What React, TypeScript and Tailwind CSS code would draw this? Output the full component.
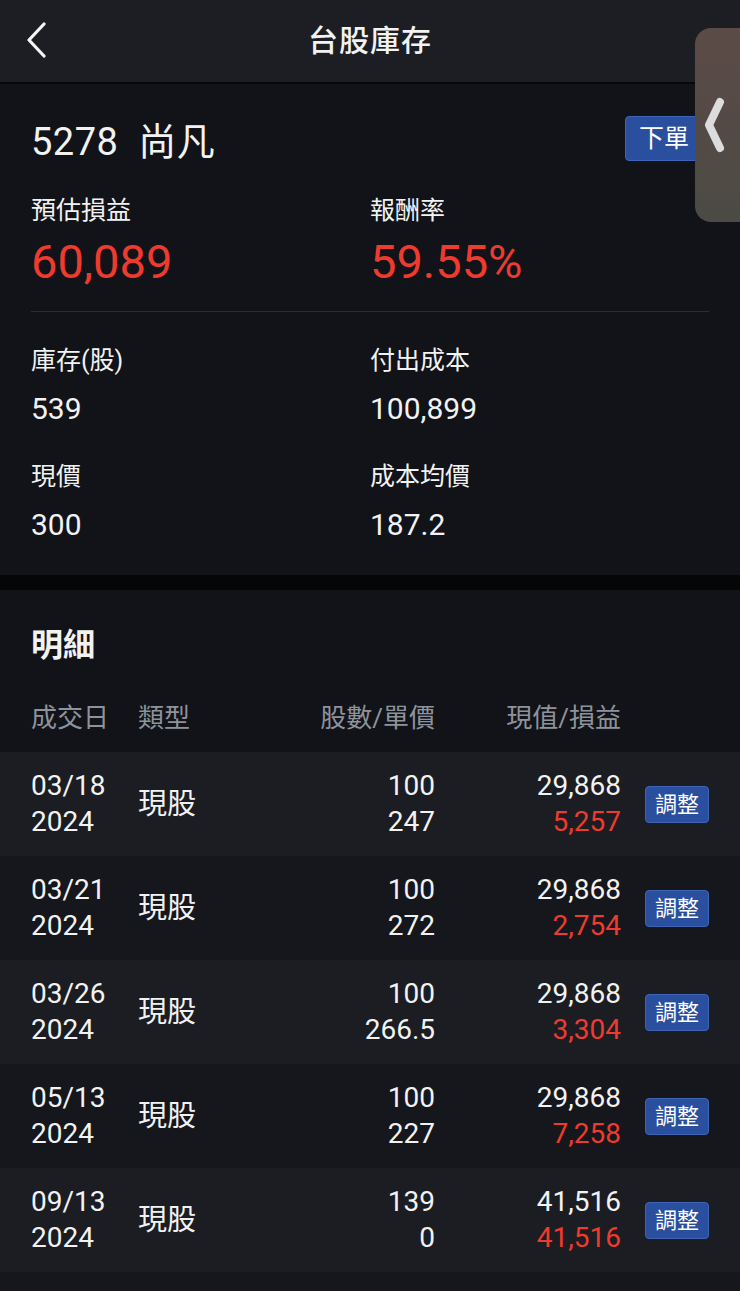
import React from "react";

const FONT = { fontFamily: '"Roboto", "Noto Sans CJK TC", "Noto Sans", sans-serif' };

const rows = [
  { md: "03/18", y: "2024", q: "100", p: "247", v: "29,868", pl: "5,257" },
  { md: "03/21", y: "2024", q: "100", p: "272", v: "29,868", pl: "2,754" },
  { md: "03/26", y: "2024", q: "100", p: "266.5", v: "29,868", pl: "3,304" },
  { md: "05/13", y: "2024", q: "100", p: "227", v: "29,868", pl: "7,258" },
  { md: "09/13", y: "2024", q: "139", p: "0", v: "41,516", pl: "41,516" },
];

export default function App() {
  return (
    <div className="relative w-[740px] min-h-[1291px] bg-[#15171c] text-[#f2f2f2] overflow-hidden" style={FONT}>
      {/* Header */}
      <div className="relative h-[84px] bg-[#1c1e23] border-b-2 border-[#07080a] flex items-center justify-center">
        <svg className="absolute left-[24px] top-[22px]" width="24" height="36" viewBox="0 0 24 36" fill="none">
          <path d="M20 2 L5 18 L20 34" stroke="#f5f5f5" strokeWidth="3.2" strokeLinecap="round" strokeLinejoin="round" />
        </svg>
        <div className="text-[30px] font-medium leading-none tracking-[1px]">台股庫存</div>
      </div>

      {/* Summary */}
      <div className="bg-[#111319] px-[31px] pt-[32px] pb-[32px]">
        <div className="flex items-center justify-between h-[45px]">
          <div className="text-[38px] leading-[44px] mt-[6px] tracking-[0.5px]">5278&nbsp; 尚凡</div>
          <div className="h-[45px] w-[86px] rounded-[4px] bg-[#2a4f9e] border border-[#3d64b8] flex items-center pl-[13px] text-[25px] text-white mr-[-2px]">
            下單
          </div>
        </div>
        <div className="grid grid-cols-2 mt-[34px]">
          <div>
            <div className="text-[25px] leading-[32px]">預估損益</div>
            <div className="text-[47px] leading-[52px] mt-[9px] text-[#ee3b2e]">60,089</div>
          </div>
          <div>
            <div className="text-[25px] leading-[32px]">報酬率</div>
            <div className="text-[47px] leading-[52px] mt-[9px] text-[#ee3b2e]">59.55%</div>
          </div>
        </div>
        <div className="h-px bg-[#2a2d33] mt-[23px]" />
        <div className="grid grid-cols-2 mt-[33px]">
          <div>
            <div className="text-[25px] leading-[32px]">庫存(股)</div>
            <div className="text-[30px] leading-[36px] mt-[14px]">539</div>
          </div>
          <div>
            <div className="text-[25px] leading-[32px]">付出成本</div>
            <div className="text-[30px] leading-[36px] mt-[14px]">100,899</div>
          </div>
        </div>
        <div className="grid grid-cols-2 mt-[34px]">
          <div>
            <div className="text-[25px] leading-[32px]">現價</div>
            <div className="text-[30px] leading-[36px] mt-[14px]">300</div>
          </div>
          <div>
            <div className="text-[25px] leading-[32px]">成本均價</div>
            <div className="text-[30px] leading-[36px] mt-[14px]">187.2</div>
          </div>
        </div>
      </div>

      <div className="h-[15px] bg-[#050608]" />

      {/* Detail */}
      <div className="bg-[#111319] pt-[35px]">
        <div className="px-[31px] text-[32px] leading-[40px] font-bold">明細</div>
        <div className="flex items-center pl-[31px] mt-[37px] mb-[18px] text-[26px] leading-[32px] text-[#8e939b]">
          <div className="w-[107px]">成交日</div>
          <div className="w-[100px]">類型</div>
          <div className="w-[197px] text-right">股數/單價</div>
          <div className="w-[186px] text-right">現值/損益</div>
        </div>
        <div>
          {rows.map((r, i) => (
            <div
              key={i}
              className={`flex items-center h-[104px] pl-[31px] ${i % 2 === 0 ? "bg-[#1b1d22]" : "bg-[#15171c]"}`}
            >
              <div className="w-[107px] text-[28px] leading-[36px]">
                <div>{r.md}</div>
                <div>{r.y}</div>
              </div>
              <div className="w-[100px] text-[29px] leading-[36px]">現股</div>
              <div className="w-[197px] text-right text-[28px] leading-[36px]">
                <div>{r.q}</div>
                <div>{r.p}</div>
              </div>
              <div className="w-[186px] text-right text-[28px] leading-[36px]">
                <div>{r.v}</div>
                <div className="text-[#ee3b2e]">{r.pl}</div>
              </div>
              <div className="ml-[24px] w-[64px] h-[37px] rounded-[4px] bg-[#2a4f9e] border border-[#3d64b8] flex items-center justify-center text-[22px] text-white">
                調整
              </div>
            </div>
          ))}
        </div>
        <div className="h-[21px] bg-[#15171c]" />
      </div>

      {/* Floating handle */}
      <div className="absolute right-0 top-[28px] w-[45px] h-[194px] rounded-l-[16px] bg-gradient-to-b from-[#5c4b47] to-[#4b4a44] flex items-center justify-center">
        <svg width="24" height="56" viewBox="0 0 24 56" fill="none" className="ml-[-6px]">
          <path d="M17 5 L6 28 L17 51" stroke="#dcdcdc" strokeWidth="8" strokeLinecap="round" strokeLinejoin="round" />
        </svg>
      </div>
    </div>
  );
}
